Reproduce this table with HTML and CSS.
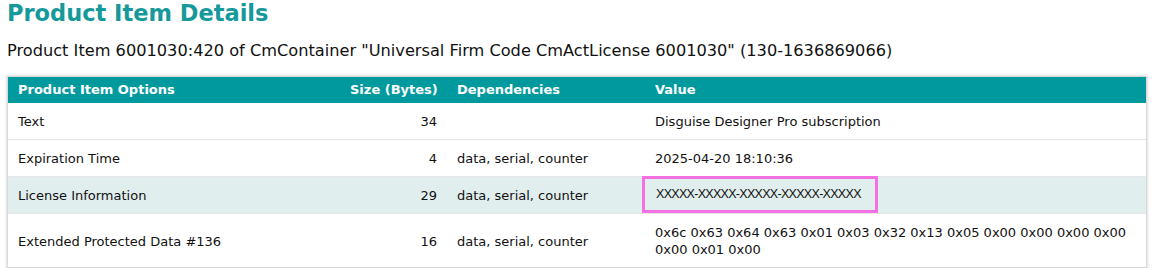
FILE: index.html
```html
<!DOCTYPE html>
<html>
<head>
<meta charset="utf-8">
<link rel="stylesheet" href="styles.css">
</head>
<body>
<h1 class="title">Product Item Details</h1>
<p class="subtitle">Product Item 6001030:420 of CmContainer "Universal Firm Code CmActLicense 6001030" (130-1636869066)</p>
<div class="card">
<table class="grid">
<colgroup>
<col class="c-name">
<col class="c-size">
<col class="c-dep">
<col class="c-val">
</colgroup>
<thead>
<tr>
<th>Product Item Options</th>
<th class="num">Size (Bytes)</th>
<th>Dependencies</th>
<th>Value</th>
</tr>
</thead>
<tbody>
<tr>
<td>Text</td>
<td class="num">34</td>
<td></td>
<td>Disguise Designer Pro subscription</td>
</tr>
<tr>
<td>Expiration Time</td>
<td class="num">4</td>
<td>data, serial, counter</td>
<td>2025-04-20 18:10:36</td>
</tr>
<tr class="alt">
<td>License Information</td>
<td class="num">29</td>
<td>data, serial, counter</td>
<td class="redact-cell"><span class="redact">XXXXX-XXXXX-XXXXX-XXXXX-XXXXX</span></td>
</tr>
<tr>
<td>Extended Protected Data #136</td>
<td class="num">16</td>
<td>data, serial, counter</td>
<td>0x6c 0x63 0x64 0x63 0x01 0x03 0x32 0x13 0x05 0x00 0x00 0x00 0x00 0x00 0x01 0x00</td>
</tr>
</tbody>
</table>
</div>
</body>
</html>
```
FILE: styles.css
```css
html, body {
  margin: 0;
  padding: 0;
  background: #ffffff;
}
body {
  padding: 0 7px;
  font-family: "DejaVu Sans", Verdana, sans-serif;
  color: #111111;
}
.title {
  margin: 0;
  font-size: 22.5px;
  line-height: 26px;
  font-weight: bold;
  color: #16999a;
}
.subtitle {
  margin: 15px 0 0 0;
  font-size: 16.2px;
  line-height: 20px;
  color: #111111;
}
.card {
  margin-top: 15px;
  border: 1px solid #d9d9d9;
  box-shadow: 0 0 2px 1px rgba(0, 0, 0, 0.12);
}
.grid {
  width: 100%;
  border-collapse: collapse;
  table-layout: fixed;
  font-size: 13px;
}
.c-name { width: 332px; }
.c-size { width: 107px; }
.c-dep { width: 198px; }
.grid th {
  background: #009a9e;
  color: #ffffff;
  font-weight: bold;
  text-align: left;
  padding: 5px 10px;
  line-height: 16px;
  white-space: nowrap;
}
.grid td {
  padding: 10px 10px 9px;
  line-height: 17px;
  height: 17px;
  vertical-align: middle;
  border-bottom: 1px solid #e6e6e6;
}
.grid tbody tr:last-child td {
  border-bottom: none;
}
.grid .num {
  text-align: right;
}
.grid tr.alt td {
  background: #e1eeee;
}
.redact-cell {
  position: relative;
}
.redact {
  position: absolute;
  left: -3px;
  top: -1px;
  width: 219px;
  height: 31px;
  border: 3px solid #f271e2;
  box-sizing: content-box;
  padding-left: 11px;
  font-family: "Liberation Sans", Arial, sans-serif;
  font-size: 12.5px;
  letter-spacing: -0.7px;
  line-height: 31px;
  color: #111111;
}
```
